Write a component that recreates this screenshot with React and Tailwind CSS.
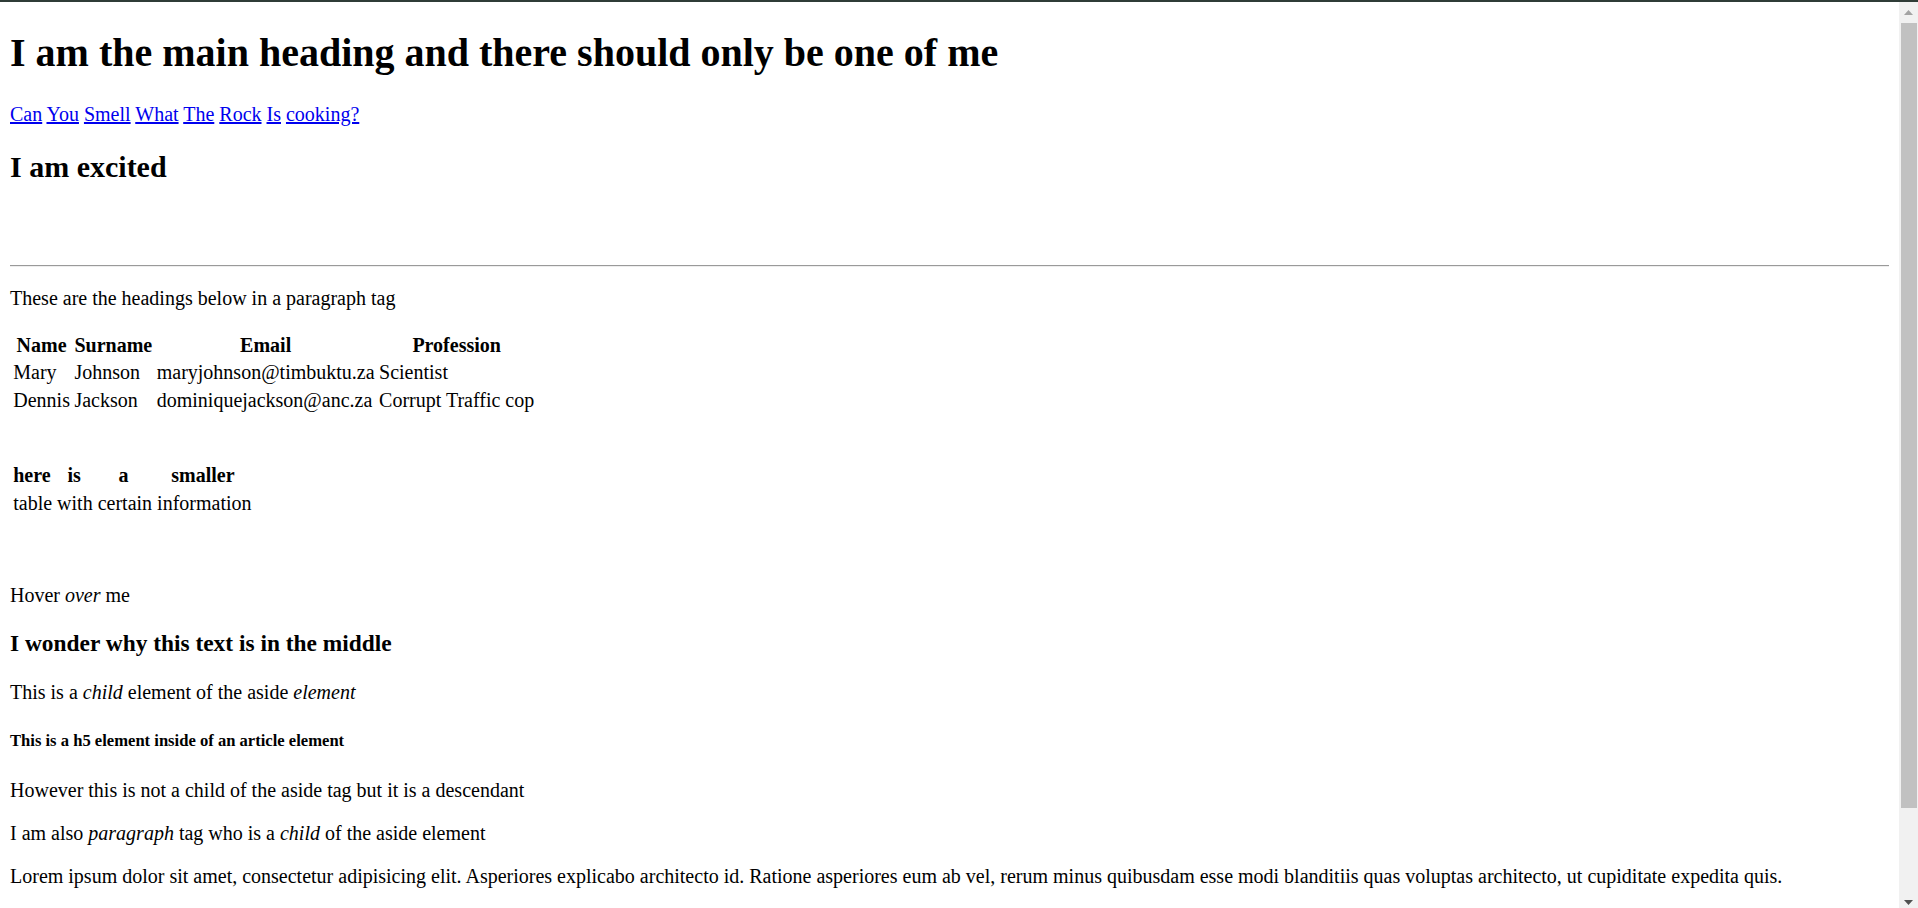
import React from "react";

const links = ["Can", "You", "Smell", "What", "The", "Rock", "Is", "cooking?"];

const people = [
  { name: "Mary", surname: "Johnson", email: "maryjohnson@timbuktu.za", job: "Scientist" },
  { name: "Dennis", surname: "Jackson", email: "dominiquejackson@anc.za", job: "Corrupt Traffic cop" },
];

const Arrow = ({ up, color }) => (
  <svg width="9" height="5" viewBox="0 0 9 5">
    <polygon points={up ? "0,5 4.5,0 9,5" : "0,0 4.5,5 9,0"} fill={color} />
  </svg>
);

const Scrollbar = () => (
  <div className="w-[19px] shrink-0 bg-[#f1f1f1] flex flex-col">
    <div className="h-[21px] flex items-center justify-center">
      <Arrow up color="#a3a3a3" />
    </div>
    <div className="h-[785px] ml-[2px] w-[16px] bg-[#c1c1c1]" />
    <div className="flex-1" />
    <div className="h-[12px] flex items-center justify-center">
      <Arrow color="#505050" />
    </div>
  </div>
);

const App = () => {
  return (
    <div className="h-[908px] overflow-hidden flex flex-col bg-white text-black font-['Liberation_Serif','Times_New_Roman',serif] text-[20px] leading-[normal]">
      <div className="h-[2px] shrink-0 bg-[#2f3c37]" />
      <div className="flex flex-1 min-h-0">
        <div className="flex-1 min-w-0 px-[10px] overflow-hidden">
          <h1 className="text-[40px] font-bold my-[26.8px]">
            I am the main heading and there should only be one of me
          </h1>
          <p className="my-[20px]">
            {links.map((word, i) => (
              <React.Fragment key={word}>
                <a href="#" className="text-[#0000ee] underline">
                  {word}
                </a>
                {i < links.length - 1 ? " " : ""}
              </React.Fragment>
            ))}
          </p>
          <h2 className="text-[30px] font-bold my-[24.9px]">I am excited</h2>
          <div className="h-[46px]" />
          <div className="my-[10px] border-t border-b border-t-[#9a9a9a] border-b-[#eeeeee]" />
          <p className="my-[20px]">These are the headings below in a paragraph tag</p>

          <table className="border-separate border-spacing-[2.5px]">
            <thead>
              <tr>
                <th className="p-[1.25px] font-bold text-center">Name</th>
                <th className="p-[1.25px] font-bold text-center">Surname</th>
                <th className="p-[1.25px] font-bold text-center">Email</th>
                <th className="p-[1.25px] font-bold text-center">Profession</th>
              </tr>
            </thead>
            <tbody>
              {people.map((p) => (
                <tr key={p.email}>
                  <td className="p-[1.25px] text-left">{p.name}</td>
                  <td className="p-[1.25px] text-left">{p.surname}</td>
                  <td className="p-[1.25px] text-left">{p.email}</td>
                  <td className="p-[1.25px] text-left">{p.job}</td>
                </tr>
              ))}
            </tbody>
          </table>

          <div className="h-[46px]" />

          <table className="table-fixed w-[248.5px] border-separate border-spacing-[2.5px]">
            <thead>
              <tr>
                <th className="w-[36px] p-[1.25px] font-bold text-center">here</th>
                <th className="w-[47px] p-[1.25px] font-bold text-center">is</th>
                <th className="w-[47px] p-[1.25px] font-bold text-center">a</th>
                <th className="w-[106px] p-[1.25px] font-bold text-center">smaller</th>
              </tr>
            </thead>
            <tbody>
              <tr>
                <td colSpan={4} className="p-[1.25px] text-left whitespace-nowrap">
                  table with certain information
                </td>
              </tr>
            </tbody>
          </table>

          <div className="h-[46px]" />

          <p className="my-[20px]">
            Hover <em className="italic">over</em> me
          </p>
          <h3 className="text-[23.4px] font-bold my-[23.4px]">
            I wonder why this text is in the middle
          </h3>
          <p className="my-[20px]">
            This is a <i className="italic">child</i> element of the aside{" "}
            <i className="italic">element</i>
          </p>
          <h5 className="text-[16.6px] font-bold my-[27.7px]">
            This is a h5 element inside of an article element
          </h5>
          <p className="my-[20px]">
            However this is not a child of the aside tag but it is a descendant
          </p>
          <p className="my-[20px]">
            I am also <i className="italic">paragraph</i> tag who is a{" "}
            <i className="italic">child</i> of the aside element
          </p>
          <p className="my-[20px]">
            Lorem ipsum dolor sit amet, consectetur adipisicing elit. Asperiores
            explicabo architecto id. Ratione asperiores eum ab vel, rerum minus
            quibusdam esse modi blanditiis quas voluptas architecto, ut cupiditate
            expedita quis.
          </p>
        </div>
        <Scrollbar />
      </div>
    </div>
  );
};

export default App;
